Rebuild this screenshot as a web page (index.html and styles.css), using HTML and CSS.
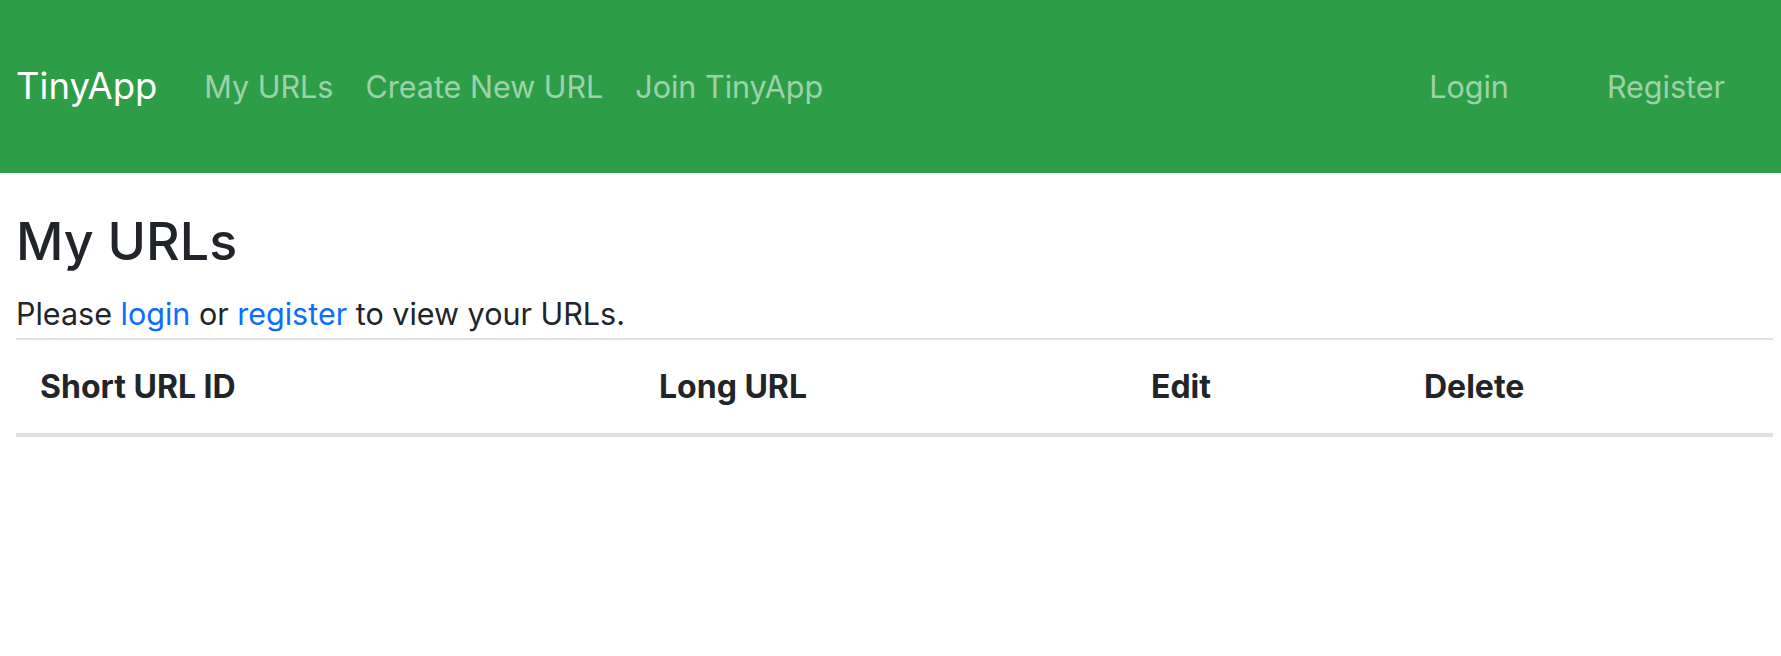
FILE: index.html
```html
<!DOCTYPE html>
<html lang="en">
<head>
<meta charset="utf-8">
<title>TinyApp</title>
<link rel="stylesheet" href="styles.css">
</head>
<body>
<nav class="navbar">
  <a class="brand" href="#">TinyApp</a>
  <div class="nav-main">
    <a class="nav-link" href="#">My URLs</a>
    <a class="nav-link" href="#">Create New URL</a>
    <a class="nav-link" href="#">Join TinyApp</a>
  </div>
  <div class="nav-right">
    <a class="nav-link" href="#">Login</a>
    <a class="nav-link register" href="#">Register</a>
  </div>
</nav>
<main class="content">
  <h1 class="title">My URLs</h1>
  <p class="notice">Please <a href="#">login</a> or <a href="#">register</a> to view your URLs.</p>
  <table class="url-table">
    <thead>
      <tr>
        <th class="col-short">Short URL ID</th>
        <th class="col-long">Long URL</th>
        <th class="col-edit">Edit</th>
        <th class="col-delete">Delete</th>
      </tr>
    </thead>
    <tbody></tbody>
  </table>
</main>
</body>
</html>
```

FILE: styles.css
```css
* { box-sizing: border-box; }
html, body { margin: 0; padding: 0; background: #fff; }
body {
  font-family: Inter, "Liberation Sans", sans-serif;
  color: #212529;
  font-size: 32px;
  line-height: 1.5;
}
a { text-decoration: none; }

.navbar {
  height: 173px;
  background: #2e9d48;
  display: flex;
  align-items: center;
  padding: 0 16px;
}
.brand {
  color: #fff;
  font-size: 36.5px;
  margin-right: 31px;
}
.nav-main { display: flex; }
.nav-link {
  color: rgba(255, 255, 255, 0.55);
  font-size: 30.5px;
  padding: 0 16px;
}
.nav-right {
  margin-left: auto;
  display: flex;
  gap: 66px;
  padding-right: 24px;
}

.content { padding: 0 8px 0 16px; }
.title {
  font-size: 52px;
  font-weight: 500;
  line-height: 1.2;
  margin: 38px 0 17px;
}
.notice {
  font-size: 30.5px;
  line-height: 48px;
  margin: 0;
}
.notice a { color: #0d6efd; }

.url-table {
  width: 100%;
  border-collapse: collapse;
  border-top: 2px solid #dee2e6;
}
.url-table th {
  text-align: left;
  font-weight: 700;
  padding: 23px 24px 22px;
  border-bottom: 4px solid #dee2e6;
}
.col-short { width: 619px; }
.col-long { width: 492px; }
.col-edit { width: 273px; }
```
